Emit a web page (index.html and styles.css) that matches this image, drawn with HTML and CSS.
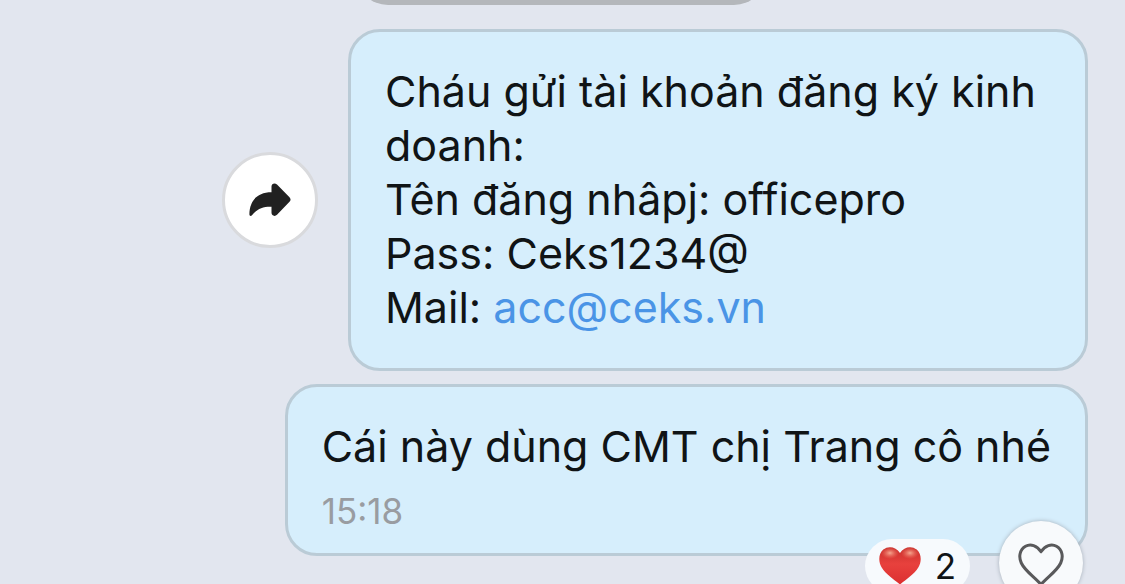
FILE: index.html
```html
<!DOCTYPE html>
<html lang="vi">
<head>
<meta charset="utf-8">
<meta name="viewport" content="width=device-width, initial-scale=1">
<title>Tin nhắn</title>
<link rel="stylesheet" href="styles.css">
</head>
<body>
<main class="chat">
  <div class="previous"></div>
  <div class="row">
    <button class="share" type="button" aria-label="Chuyển tiếp">
      <svg class="share-icon" viewBox="0 0 42 34" aria-hidden="true">
        <path d="M22.500 9.300V3.500C22.500.6 25.800-.6 28 1.600L40.500 14.200Q42.600 16.500 40.500 18.800L28 31.800C25.800 34 22.500 32.600 22.500 29.800V23.800C14 23.500 8 26 3 32.200C1.800 33.500 .4 33 .4 31.200C.6 18 8 9.300 22.500 9.300Z" fill="#212121"/>
      </svg>
    </button>
    <article class="bubble">
      <p class="text">Cháu gửi tài khoản đăng ký kinh doanh:<br>Tên đăng nhâpj: officepro<br>Pass: Ceks1234@<br>Mail: <a class="mail" href="mailto:acc@ceks.vn">acc@ceks.vn</a></p>
    </article>
  </div>
  <div class="row">
    <article class="bubble bubble-last">
      <p class="text">Cái này dùng CMT chị Trang cô nhé</p>
      <time class="time">15:18</time>
      <div class="reactions">
        <button class="count" type="button">
          <svg class="red-heart" viewBox="0 0 42 38" aria-hidden="true">
            <defs>
              <linearGradient id="red" x1="0" y1="0" x2="0" y2="1">
                <stop offset="0" stop-color="#c9302d"/>
                <stop offset=".45" stop-color="#e8413d"/>
                <stop offset="1" stop-color="#dc2f30"/>
              </linearGradient>
              <radialGradient id="shine">
                <stop offset="0" stop-color="#ffc4a8" stop-opacity=".8"/>
                <stop offset="1" stop-color="#f47c68" stop-opacity="0"/>
              </radialGradient>
            </defs>
            <path d="M21 6C17-.5 9-1.500 4.300 2.600C-.8 7-.7 15 2.700 20.500C7 27.500 14.500 32 21 37.500C27.500 32 35 27.500 39.300 20.500C42.700 15 42.800 7 37.700 2.600C33-1.500 25-.5 21 6Z" fill="url(#red)"/>
            <ellipse cx="11" cy="6" rx="9" ry="6" fill="url(#shine)"/>
            <ellipse cx="31" cy="6" rx="9" ry="6" fill="url(#shine)"/>
          </svg>
          <span class="number">2</span>
        </button>
        <button class="like" type="button" aria-label="Thích">
          <svg class="heart" viewBox="0 0 46 44" aria-hidden="true">
            <path d="M23 8.800C19 2.500 12.500.4 7.500 3.300C1.500 6.800.5 14 3.300 20C7 28 16 33.500 23 41.500C30 33.500 39 28 42.700 20C45.500 14 44.500 6.800 38.500 3.300C33.500.4 27 2.500 23 8.800Z" fill="none" stroke="#59595b" stroke-width="3" stroke-linejoin="round"/>
          </svg>
        </button>
      </div>
    </article>
  </div>
</main>
</body>
</html>
```
FILE: styles.css
```css
* {
  box-sizing: border-box;
}

body {
  margin: 0;
  height: 100vh;
  overflow: hidden;
  background: #e2e6ef;
  color: #101416;
  font-family: Inter, "Noto Sans", sans-serif;
}

button {
  padding: 0;
  border: 0;
  color: inherit;
  font: inherit;
}

.chat {
  display: flex;
  flex-direction: column;
  gap: 13px;
  padding-right: 37px;
}

.previous {
  align-self: flex-end;
  width: 410px;
  height: 64px;
  margin-top: -59px;
  margin-right: 322px;
  margin-bottom: 11px;
  border-radius: 32px;
  background: #b4b7bb;
}

.row {
  display: flex;
  align-items: center;
  justify-content: flex-end;
  gap: 30px;
}

.share {
  display: grid;
  place-items: center;
  flex: none;
  width: 96px;
  height: 96px;
  border: 3px solid #d9dadd;
  border-radius: 50%;
  background: #fff;
}

.share-icon {
  width: 42px;
  height: 34px;
}

.bubble {
  position: relative;
  max-width: 740px;
  padding: 32px 34px 34px;
  border: 3px solid #bacbd6;
  border-radius: 32px;
  background: #d6eefc;
}

.bubble-last {
  max-width: none;
  padding-bottom: 22px;
}

.text {
  margin: 0;
  font-size: 43px;
  line-height: 54px;
}

.mail {
  color: #4a94e6;
  text-decoration: none;
}

.time {
  display: block;
  margin-top: 18px;
  color: #999ca1;
  font-size: 35px;
  line-height: 40px;
}

.reactions {
  position: absolute;
  right: 2px;
  bottom: -52px;
  display: flex;
  align-items: flex-start;
  gap: 29px;
}

.count {
  display: flex;
  align-items: center;
  justify-content: center;
  gap: 14px;
  width: 105px;
  height: 54px;
  margin-top: 18px;
  border-radius: 27px;
  background: #f7fafd;
}

.number {
  font-size: 35px;
  line-height: 32px;
}

.red-heart {
  width: 42px;
  height: 38px;
}

.like {
  display: grid;
  place-items: center;
  width: 84px;
  height: 84px;
  padding-top: 4px;
  border-radius: 50%;
  background: #f8fafc;
  box-shadow: 0 0 4px #a4aeb8;
}

.heart {
  width: 46px;
  height: 44px;
}
```
